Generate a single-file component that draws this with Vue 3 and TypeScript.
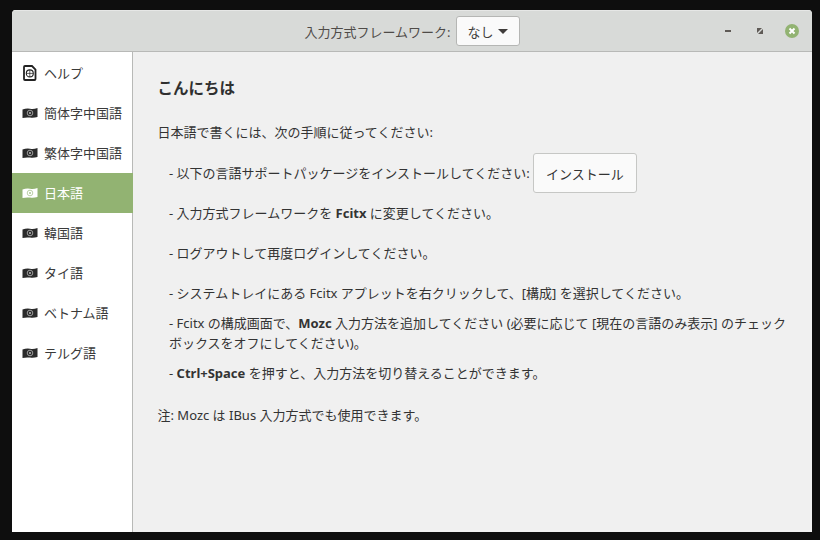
<script setup lang="ts">
const languages = [
  { name: 'ヘルプ', icon: 'help' },
  { name: '簡体字中国語', icon: 'flag' },
  { name: '繁体字中国語', icon: 'flag' },
  { name: '日本語', icon: 'flag', active: true },
  { name: '韓国語', icon: 'flag' },
  { name: 'タイ語', icon: 'flag' },
  { name: 'ベトナム語', icon: 'flag' },
  { name: 'テルグ語', icon: 'flag' },
]
</script>

<template>
  <div class="desktop">
    <div class="window">
      <header class="titlebar">
        <div class="framework">
          <span class="framework-label">入力方式フレームワーク:</span>
          <button class="combo">
            <span>なし</span>
            <span class="caret"></span>
          </button>
        </div>
        <div class="controls">
          <svg class="ctl" width="16" height="16" viewBox="0 0 16 16">
            <rect x="5" y="7" width="6" height="2" fill="#5f5a56" />
          </svg>
          <svg class="ctl" width="16" height="16" viewBox="0 0 16 16">
            <rect x="5" y="5" width="6" height="6" fill="#5f5a56" />
            <path d="M5 11l6-6" stroke="#d8dad8" stroke-width="1.400" />
          </svg>
          <svg class="ctl" width="16" height="16" viewBox="0 0 16 16">
            <circle cx="8" cy="8" r="7" fill="#92b372" />
            <path d="M5.500 5.500l5 5M10.500 5.500l-5 5" stroke="#fff" stroke-width="2" />
          </svg>
        </div>
      </header>
      <div class="body">
        <nav class="sidebar">
          <div v-for="l in languages" :key="l.name" class="item" :class="{ active: l.active }">
            <svg v-if="l.icon === 'help'" class="icon" width="16" height="16" viewBox="0 0 16 16">
              <path d="M3 1h7l3.500 3.500V14a1 1 0 0 1-1 1H3a1 1 0 0 1-1-1V2a1 1 0 0 1 1-1z" fill="#fff" stroke="#222" stroke-width="1.800" />
              <circle cx="7.800" cy="8.400" r="3.500" fill="none" stroke="#222" stroke-width="1.100" />
              <path d="M4.500 8.400h6.600M7.800 5v6.800" stroke="#222" stroke-width="0.700" />
            </svg>
            <svg v-else class="icon" width="16" height="12" viewBox="0 0 16 12">
              <path d="M0.500 2.500q4-1.500 7.500-0.800t7.500-0.700v9q-4 1.200-7.500 0.600t-7.500 0.400z" :fill="l.active ? '#fff' : '#2b2b2b'" />
              <circle cx="8" cy="6" r="2.800" fill="none" :stroke="l.active ? '#a9c48f' : '#b8b8b8'" stroke-width="0.800" />
              <circle cx="8" cy="6" r="1" :fill="l.active ? '#a9c48f' : '#b8b8b8'" />
            </svg>
            <span class="item-label">{{ l.name }}</span>
          </div>
        </nav>
        <main class="content">
          <h1 class="title">こんにちは</h1>
          <p class="intro">日本語で書くには、次の手順に従ってください:</p>
          <div class="steps">
            <div class="step tall">
              <span>- 以下の言語サポートパッケージをインストールしてください:</span>
              <button class="install">インストール</button>
            </div>
            <div class="step tall"><span>- 入力方式フレームワークを <b>Fcitx</b> に変更してください。</span></div>
            <div class="step tall"><span>- ログアウトして再度ログインしてください。</span></div>
            <div class="step tall"><span>- システムトレイにある Fcitx アプレットを右クリックして、[構成] を選択してください。</span></div>
            <div class="step wrap">- Fcitx の構成画面で、<b>Mozc</b> 入力方法を追加してください (必要に応じて [現在の言語のみ表示] のチェックボックスをオフにしてください)。</div>
            <div class="step wrap last"><span>- <b>Ctrl+Space</b> を押すと、入力方法を切り替えることができます。</span></div>
          </div>
          <p class="note">注: Mozc は IBus 入力方式でも使用できます。</p>
        </main>
      </div>
    </div>
  </div>
</template>

<style>
html, body { margin: 0; background: #0e0e0e; }
</style>

<style scoped>
.desktop {
  width: 820px;
  height: 540px;
  padding: 10px 8px 8px 12px;
  box-sizing: border-box;
  background: #0e0e0e;
  font-family: "Noto Sans", "Noto Sans CJK JP", sans-serif;
  font-size: 13px;
  color: #333;
}
.window {
  height: 100%;
  display: flex;
  flex-direction: column;
  border-radius: 4px 4px 0 0;
  overflow: hidden;
  background: #f0f0f0;
}
.titlebar {
  height: 42px;
  flex: none;
  box-sizing: border-box;
  border-bottom: 1px solid #b8b9b7;
  background: #d8dad8;
  box-shadow: inset 0 1px 0 #e6e7e6;
  display: grid;
  grid-template-columns: 1fr auto 1fr;
  align-items: center;
}
.framework {
  grid-column: 2;
  display: flex;
  align-items: center;
  gap: 5px;
  color: #4f4b48;
}
.framework-label { padding-top: 1px; }
.combo {
  width: 64px;
  height: 30px;
  box-sizing: border-box;
  padding: 1px 11px 0;
  display: flex;
  align-items: center;
  gap: 4px;
  white-space: nowrap;
  background: #fafafa;
  border: 1px solid #b5b6b4;
  border-radius: 3px;
  font: inherit;
  color: #403d3b;
}
.caret {
  width: 0;
  height: 0;
  border-left: 5px solid transparent;
  border-right: 5px solid transparent;
  border-top: 5px solid #3f3c3a;
}
.controls {
  grid-column: 3;
  justify-self: end;
  display: flex;
  align-items: center;
  gap: 16px;
  padding-right: 12px;
}
.ctl { display: block; }
.body { flex: 1; display: flex; min-height: 0; }
.sidebar {
  width: 121px;
  flex: none;
  box-sizing: border-box;
  padding-top: 1px;
  background: #fff;
  border-right: 1px solid #b8b9b7;
}
.item {
  height: 40px;
  display: flex;
  align-items: center;
  gap: 6px;
  padding-left: 10px;
  color: #3a3a3a;
}
.item-label { padding-bottom: 1px; }
.item.active { background: #92b372; color: #fff; margin-right: -1px; }
.icon { display: block; flex: none; width: 16px; }
.content {
  flex: 1;
  padding: 25px 24px 0 24.500px;
  min-width: 0;
}
.title {
  margin: 0;
  font-size: 15.500px;
  font-weight: 700;
  line-height: 22px;
  color: #2f2f2f;
}
.intro { margin: 23px 0 0; line-height: 20px; }
.steps { margin-top: 11px; padding-left: 11.500px; }
.step { line-height: 20px; }
.step.tall { height: 40px; display: flex; align-items: center; gap: 3px; white-space: nowrap; }
.step b, .note b { font-weight: 700; }
.step.wrap.last { margin-top: 10px; }
.install {
  width: 104px;
  height: 40px;
  background: #fafafa;
  border: 1px solid #c6c7c5;
  border-radius: 3px;
  font: inherit;
  color: #333;
  padding: 1px 0 0;
}
.note { margin: 22px 0 0; line-height: 20px; }
</style>
